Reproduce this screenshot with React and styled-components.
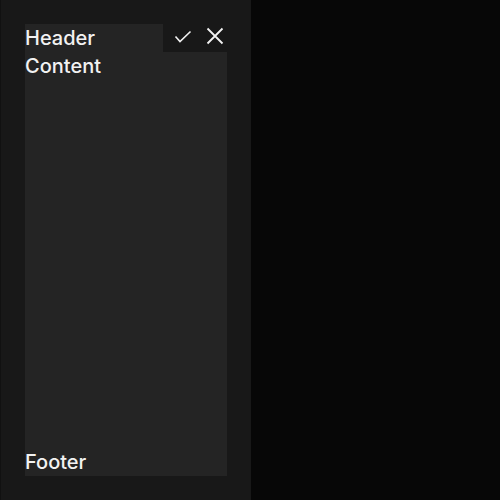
import React from "react";
import styled, { createGlobalStyle } from "styled-components";

const Global = createGlobalStyle`
  html, body { margin: 0; padding: 0; background: #070707; }
  body { font-family: Inter, "Noto Sans", sans-serif; }
`;

const Page = styled.div`
  display: flex;
  width: 500px;
  height: 500px;
  background: #070707;
`;

const Sidebar = styled.aside`
  width: 202px;
  padding: 24px;
  background: #181818;
  border-left: 1px solid #111111;
  display: flex;
`;

const Card = styled.section`
  flex: 1;
  display: flex;
  flex-direction: column;
  background: #242424;
  color: #f2f2f2;
  font-size: 20px;
  font-weight: 500;
  line-height: 28px;
`;

const Header = styled.div`
  display: flex;
  height: 28px;
  background: #181818;
`;

const Title = styled.div`
  flex: 1;
  min-width: 0;
  background: #242424;
`;

const Actions = styled.div`
  display: flex;
  padding-left: 4px;
  margin-right: -4px;
`;

const IconButton = styled.button`
  width: 32px;
  height: 28px;
  padding: 0;
  border: 0;
  background: transparent;
  color: #f2f2f2;
  display: block;
  svg { display: block; }
`;

const Body = styled.div`
  flex: 1;
`;

const Footer = styled.div``;

export default function App() {
  return (
    <>
      <Global />
      <Page>
        <Sidebar>
          <Card>
            <Header>
              <Title>Header</Title>
              <Actions>
                <IconButton aria-label="Confirm">
                  <svg width="32" height="28" viewBox="0 0 32 28">
                    <path d="M8.5 12.5 L13 17.5 L23.5 7.5" fill="none" stroke="currentColor" strokeWidth="1.6" />
                  </svg>
                </IconButton>
                <IconButton aria-label="Close">
                  <svg width="32" height="28" viewBox="0 0 32 28">
                    <path d="M8.5 4.5 L23.5 19.5 M23.5 4.5 L8.5 19.5" fill="none" stroke="currentColor" strokeWidth="1.8" />
                  </svg>
                </IconButton>
              </Actions>
            </Header>
            <Body>Content</Body>
            <Footer>Footer</Footer>
          </Card>
        </Sidebar>
      </Page>
    </>
  );
}
